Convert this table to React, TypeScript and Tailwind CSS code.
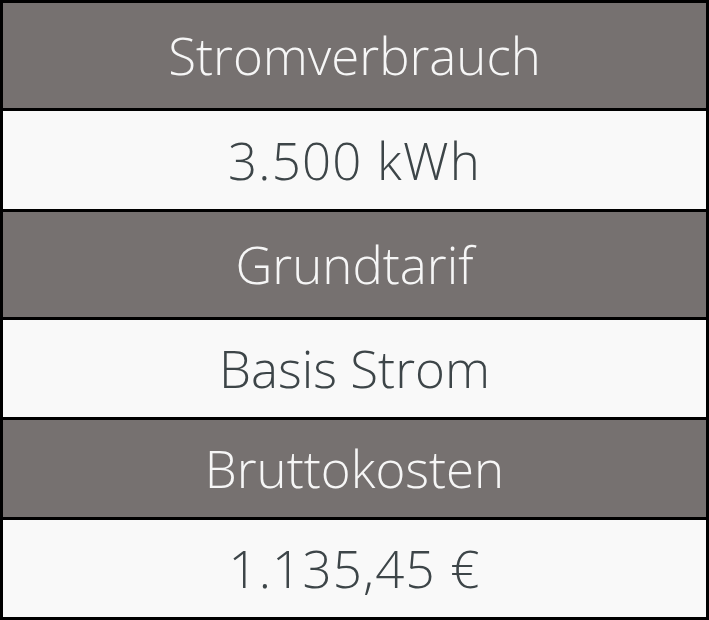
const rows = [
  { label: 'Stromverbrauch', head: true, h: 'h-[105px]', wide: false },
  { label: '3.500 kWh', head: false, h: 'h-[98px]', wide: true },
  { label: 'Grundtarif', head: true, h: 'h-[105px]', wide: false },
  { label: 'Basis Strom', head: false, h: 'h-[97px]', wide: false },
  { label: 'Bruttokosten', head: true, h: 'h-[97px]', wide: false },
  { label: '1.135,45 €', head: false, h: 'h-[97px]', wide: true },
]

export default function App() {
  return (
    <div className="w-[709px] h-[620px] bg-black p-[3px] flex flex-col gap-[3px] font-['Open_Sans',sans-serif] font-light">
      {rows.map((row) => (
        <div
          key={row.label}
          className={`${row.h} flex items-center justify-center text-[51px] leading-none ${
            row.head ? 'bg-[#767170] text-[#f6f6f6]' : 'bg-[#f9f9f9] text-[#3d4548]'
          } ${row.wide ? 'tracking-[1.2px]' : ''}`}
        >
          {row.label}
        </div>
      ))}
    </div>
  )
}
